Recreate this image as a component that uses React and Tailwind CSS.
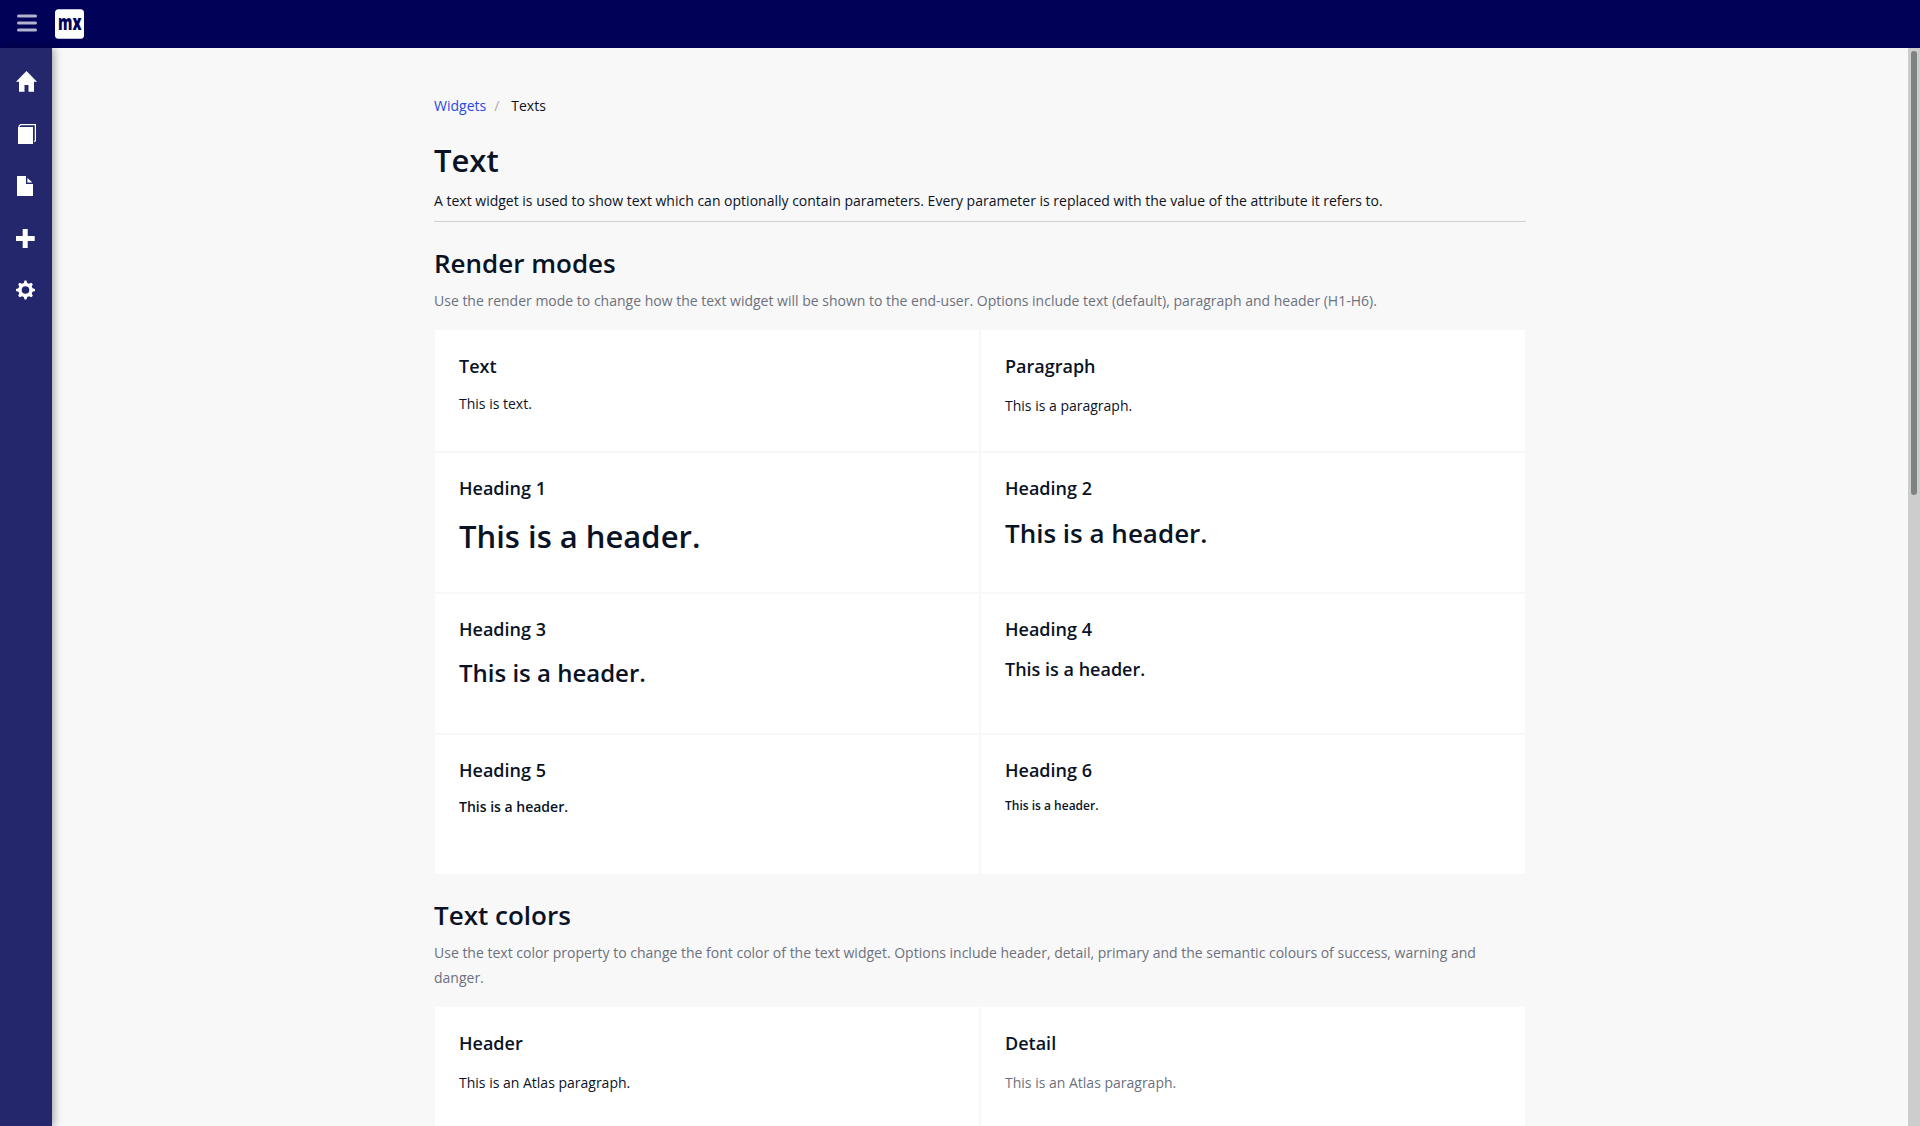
const renderModes = [
  { title: "Text", text: "This is text.", style: "text-sm leading-[19px]" },
  { title: "Paragraph", text: "This is a paragraph.", style: "text-sm leading-[23px]" },
  { title: "Heading 1", text: "This is a header.", style: "text-[31px] leading-[40px] font-semibold", tight: true },
  { title: "Heading 2", text: "This is a header.", style: "text-[26px] leading-[34px] font-semibold", tight: true },
  { title: "Heading 3", text: "This is a header.", style: "text-[24px] leading-[31px] font-semibold", tight: true },
  { title: "Heading 4", text: "This is a header.", style: "text-[18px] leading-[24px] font-semibold", tight: true },
  { title: "Heading 5", text: "This is a header.", style: "text-sm leading-[17px] font-semibold", tight: true },
  { title: "Heading 6", text: "This is a header.", style: "text-xs leading-[15px] font-semibold", tight: true },
];

const textColors = [
  { title: "Header", text: "This is an Atlas paragraph.", style: "text-sm leading-[23px]" },
  { title: "Detail", text: "This is an Atlas paragraph.", style: "text-sm leading-[23px] text-[#6c717e]" },
];

function Cell({ title, text, style, tight }) {
  return (
    <div className={`border border-[#f8f8f8] bg-white px-6 ${tight ? "pt-[23px]" : "pt-6"}`}>
      <h4 className="mb-4 text-[18px] leading-6 font-semibold">{title}</h4>
      <p className={style}>{text}</p>
    </div>
  );
}

function TopBar() {
  return (
    <header className="flex h-12 shrink-0 items-start bg-[#010157]">
      <svg className="mt-[13px] ml-[17px] h-5 w-5" viewBox="0 0 20 20" stroke="#b3b3cd" strokeWidth="3" strokeLinecap="round">
        <path d="M1.5 3H18.5M1.5 10H18.5M1.5 17H18.5" />
      </svg>
      <svg className="mt-[9px] ml-[18px] h-[30px] w-[29px] overflow-visible" viewBox="0 0 29 30">
        <rect y=".3" width="29" height="29.4" rx="3.5" fill="#fff" />
        <text
          x="3"
          y="21"
          textLength="23.5"
          lengthAdjust="spacingAndGlyphs"
          className="font-['Open_Sans',sans-serif] text-[21px] font-extrabold"
          fill="#010157"
        >
          mx
        </text>
      </svg>
    </header>
  );
}

function SideBar() {
  return (
    <nav className="z-10 flex w-[52px] shrink-0 flex-col items-start bg-[#24276c] pt-[23px] pl-4 text-white shadow-[2px_0_8px_rgba(0,0,0,0.35)]">
      <svg className="h-[21px] w-[21px]" viewBox="0 0 21 21" fill="currentColor">
        <path d="M10.5 0L21 10.7H18V20.7H12.5V14H8.5V20.7H3V10.7H0Z" />
      </svg>
      <svg className="mt-[32px] ml-[2px] h-5 w-[18px]" viewBox="0 0 18 20" fill="currentColor">
        <path d="M0 3H15V20H0Z" />
        <path d="M.6 2.6L2.8.6H17.4V16.6L16.2 17.8" fill="none" stroke="currentColor" strokeWidth="1.3" />
      </svg>
      <svg className="mt-[32px] ml-px h-5 w-4" viewBox="0 0 16 20" fill="currentColor">
        <path d="M0 0H9V8H16V20H0Z" />
        <path d="M10.4 2V6.6H15.4Z" />
      </svg>
      <svg className="mt-[33px] h-[19px] w-[19px]" viewBox="0 0 19 19" fill="currentColor">
        <path d="M6.7 0H11.7V7H18.7V12H11.7V19H6.7V12H0V7H6.7Z" />
      </svg>
      <svg className="mt-[32px] h-5 w-[19px]" viewBox="0 0 20 20" fill="currentColor">
        <path
          fillRule="evenodd"
          d="M9 0H11L11.8 2.6L13.7 3.4L16.1 2.3L17.7 3.9L16.6 6.3L17.4 8.2L20 9V11L17.4 11.8L16.6 13.7L17.7 16.1L16.1 17.7L13.7 16.6L11.8 17.4L11 20H9L8.2 17.4L6.3 16.6L3.9 17.7L2.3 16.1L3.4 13.7L2.6 11.8L0 11V9L2.6 8.2L3.4 6.3L2.3 3.9L3.9 2.3L6.3 3.4L8.2 2.6ZM10 6A4 4 0 1 0 10 14A4 4 0 1 0 10 6Z"
        />
      </svg>
    </nav>
  );
}

export default function App() {
  return (
    <div className="flex h-[1126px] w-[1920px] flex-col overflow-hidden bg-[#f8f8f8] font-['Open_Sans',sans-serif] text-sm text-[#0a1326]">
      <TopBar />
      <div className="flex min-h-0 flex-1">
        <SideBar />
        <main className="flex-1 overflow-hidden">
          <div className="ml-[382px] w-[1092px] pt-12">
            <nav className="flex h-5 items-center leading-5">
              <a className="text-[#264ae5]">Widgets</a>
              <span className="pr-3 pl-2 text-[#a9acb3]">/</span>
              <span>Texts</span>
            </nav>
            <h1 className="mt-6 text-[31px] leading-10 font-semibold">Text</h1>
            <p className="mt-2 leading-[25px]">
              A text widget is used to show text which can optionally contain parameters. Every parameter is replaced
              with the value of the attribute it refers to.
            </p>
            <hr className="mt-2 border-[#ced0d3]" />
            <section className="mt-6">
              <h2 className="text-[26px] leading-[34px] font-semibold">Render modes</h2>
              <p className="mt-2 mb-4 leading-[25px] text-[#6c717e]">
                Use the render mode to change how the text widget will be shown to the end-user. Options include text
                (default), paragraph and header (H1-H6).
              </p>
              <div className="grid grid-cols-2 grid-rows-[123px_141px_141px_141px]">
                {renderModes.map((item) => (
                  <Cell key={item.title} {...item} />
                ))}
              </div>
            </section>
            <section className="mt-[23px]">
              <h2 className="text-[26px] leading-[34px] font-semibold">Text colors</h2>
              <p className="mt-2 mb-4 leading-[25px] text-[#6c717e]">
                Use the text color property to change the font color of the text widget. Options include header, detail,
                primary and the semantic colours of success, warning and danger.
              </p>
              <div className="grid grid-cols-2 grid-rows-[123px]">
                {textColors.map((item) => (
                  <Cell key={item.title} {...item} />
                ))}
              </div>
            </section>
          </div>
        </main>
        <div className="flex w-3 shrink-0 justify-center bg-[#cdcdcd] pt-[3px]">
          <div className="h-[444px] w-1.5 rounded-full bg-[#7f8282]" />
        </div>
      </div>
    </div>
  );
}
